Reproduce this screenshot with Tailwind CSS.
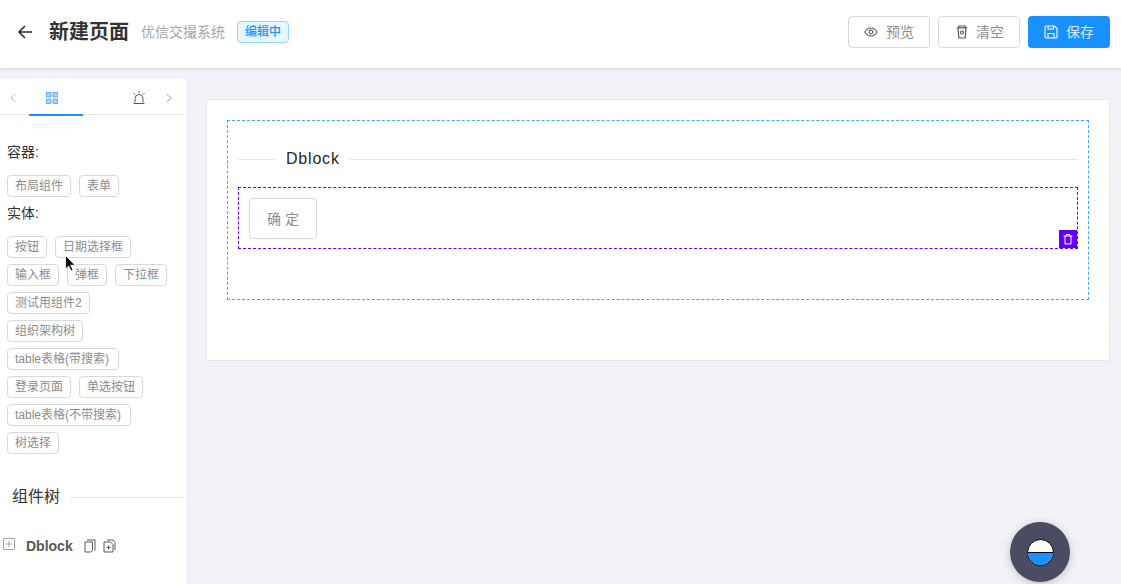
<!DOCTYPE html>
<html lang="zh">
<head>
  <meta charset="UTF-8" />
  <title>新建页面</title>
  <script src="https://cdn.jsdelivr.net/npm/@tailwindcss/browser@4"></script>
</head>
<body class="relative h-[584px] w-[1121px] overflow-hidden bg-[#f0f2f5] font-['Liberation_Sans','Noto_Sans_CJK_SC',sans-serif] text-[#333]">

  <!-- 顶部 -->
  <header class="relative z-10 flex h-[68px] items-center justify-between bg-white pr-[11px] pb-1 pl-[17px] shadow-[0_1px_4px_rgba(0,21,41,0.12)]">
    <div class="flex items-center">
      <svg class="h-4 w-4 text-[#262626]" viewBox="0 0 16 16" fill="none" stroke="currentColor" stroke-width="1.5"><path d="M15 8H2M8 2 2 8l6 6"/></svg>
      <h1 class="ml-4 text-xl leading-7 font-semibold">新建页面</h1>
      <span class="ml-3 text-sm text-[#a6a6a6]">优信交撮系统</span>
      <span class="ml-3 flex h-[22px] items-center rounded-[4px] border border-[#91d5ff] bg-[#e6f7ff] px-[7px] text-xs font-medium text-[#1890ff]">编辑中</span>
    </div>
    <div class="flex items-center gap-2">
      <button class="flex h-8 w-[82px] items-center justify-center rounded-[4px] border border-[#d9d9d9] bg-white text-sm text-[#8c8c8c]">
        <svg class="mr-2 h-[14px] w-[14px] text-[#595959]" viewBox="0 0 14 14" fill="none" stroke="currentColor" stroke-width="1.1"><path d="M.8 7C2.3 4.4 4.4 3 7 3s4.7 1.400 6.200 4C11.700 9.600 9.600 11 7 11S2.300 9.600.8 7Z"/><circle cx="7" cy="7" r="1.900"/></svg>预览
      </button>
      <button class="flex h-8 w-[82px] items-center justify-center rounded-[4px] border border-[#d9d9d9] bg-white pl-0.5 text-sm text-[#8c8c8c]">
        <svg class="mr-2 h-[14px] w-3 text-[#595959]" viewBox="0 0 12 14" fill="none" stroke="currentColor" stroke-width="1.2"><path d="M.8 2.800h10.400M2.500 2.500 3 1h6l.5 1.500M2 3l.8 10h6.400L10 3"/><circle cx="6" cy="7.500" r="1.500"/></svg>清空
      </button>
      <button class="flex h-8 w-[82px] items-center justify-center rounded-[4px] bg-[#1890ff] text-sm text-white/80">
        <svg class="mr-2 h-[14px] w-[14px] text-white" viewBox="0 0 14 14" fill="none" stroke="currentColor" stroke-width="1.100"><path d="M1 2a1 1 0 0 1 1-1h8.500L13 3.500V12a1 1 0 0 1-1 1H2a1 1 0 0 1-1-1ZM4 1v3h5.500V1M4 13V8.500h6V13"/></svg>保存
      </button>
    </div>
  </header>

  <div class="flex h-[516px] items-start">
    <!-- 左侧 -->
    <aside class="mt-[11px] h-[505px] w-[186px] shrink-0 bg-white">
      <div class="flex h-9 items-center border-b border-[#e8e8e8] pt-0.5 text-[#a6a6a6]">
        <svg class="ml-[9px] h-[10px] w-[8px] text-[#bfbfbf]" viewBox="0 0 8 10" fill="none" stroke="currentColor"><path d="M6.500 1 2 5l4.500 4"/></svg>
        <div class="relative ml-3 flex h-[34px] w-[54px] items-center justify-center pr-2">
          <svg class="h-3 w-3 text-[#1890ff]" viewBox="0 0 12 12" fill="#a3d3ff" stroke="currentColor" stroke-opacity="0.6"><path d="M.5.500h4.500v4.500H.5ZM7 .500h4.500v4.500H7ZM.5 7h4.500v4.500H.5ZM7 7h4.500v4.500H7Z"/></svg>
          <div class="absolute right-0 -bottom-px left-0 h-0.5 bg-[#1890ff]"></div>
        </div>
        <svg class="ml-[49px] h-[14px] w-[14px] text-[#595959]" viewBox="0 0 14 14" fill="none" stroke="currentColor"><path d="M3 11.500V7.500a4 4 0 0 1 8 0v4M1.500 12.500h11M7 0v2M1.500 2 3 3.500M12.500 2 11 3.500"/></svg>
        <svg class="ml-[19px] h-[10px] w-[8px]" viewBox="0 0 8 10" fill="none" stroke="currentColor"><path d="M1.500 1 6 5 1.500 9"/></svg>
      </div>

      <div class="px-[7px] text-sm">
        <p class="mt-[27px] leading-5">容器:</p>
        <div class="mt-[13px] flex w-[164px] flex-wrap gap-x-2 gap-y-1.5">
          <span class="flex h-[22px] items-center rounded-[4px] border border-[#d9d9d9] px-[7px] text-xs text-[#8c8c8c]">布局组件</span>
          <span class="flex h-[22px] items-center rounded-[4px] border border-[#d9d9d9] px-[7px] text-xs text-[#8c8c8c]">表单</span>
        </div>
        <p class="mt-1.5 leading-5">实体:</p>
        <div class="mt-[13px] flex w-[164px] flex-wrap gap-x-2 gap-y-1.5">
          <span class="flex h-[22px] items-center rounded-[4px] border border-[#d9d9d9] px-[7px] text-xs text-[#8c8c8c]">按钮</span>
          <span class="flex h-[22px] items-center rounded-[4px] border border-[#d9d9d9] px-[7px] text-xs text-[#8c8c8c]">日期选择框</span>
          <span class="flex h-[22px] items-center rounded-[4px] border border-[#d9d9d9] px-[7px] text-xs text-[#8c8c8c]">输入框</span>
          <span class="flex h-[22px] items-center rounded-[4px] border border-[#d9d9d9] px-[7px] text-xs text-[#8c8c8c]">弹框</span>
          <span class="flex h-[22px] items-center rounded-[4px] border border-[#d9d9d9] px-[7px] text-xs text-[#8c8c8c]">下拉框</span>
          <span class="flex h-[22px] items-center rounded-[4px] border border-[#d9d9d9] px-[7px] text-xs text-[#8c8c8c]">测试用组件2</span>
          <span class="flex h-[22px] items-center rounded-[4px] border border-[#d9d9d9] px-[7px] text-xs text-[#8c8c8c]">组织架构树</span>
          <span class="flex h-[22px] items-center rounded-[4px] border border-[#d9d9d9] pr-[9px] pl-[7px] text-xs text-[#8c8c8c]">table表格(带搜索)</span>
          <span class="flex h-[22px] items-center rounded-[4px] border border-[#d9d9d9] px-[7px] text-xs text-[#8c8c8c]">登录页面</span>
          <span class="flex h-[22px] items-center rounded-[4px] border border-[#d9d9d9] px-[7px] text-xs text-[#8c8c8c]">单选按钮</span>
          <span class="flex h-[22px] items-center rounded-[4px] border border-[#d9d9d9] pr-[9px] pl-[7px] text-xs text-[#8c8c8c]">table表格(不带搜索)</span>
          <span class="flex h-[22px] items-center rounded-[4px] border border-[#d9d9d9] px-[7px] text-xs text-[#8c8c8c]">树选择</span>
        </div>
      </div>

      <!-- 组件树 -->
      <div class="mt-[31px] flex items-center">
        <span class="ml-3 text-base leading-6">组件树</span>
        <div class="ml-2.5 h-px flex-1 bg-[#e8e8e8]"></div>
      </div>
      <div class="mt-[27px] flex items-center">
        <svg class="-mt-1 ml-[3px] h-3 w-3 text-[#a6a6a6]" viewBox="0 0 12 12" fill="none" stroke="currentColor"><path d="M.5.500h11v11H.5ZM3 6h6M6 3v6"/></svg>
        <span class="ml-[11px] text-sm font-bold text-[#595959]">Dblock</span>
        <svg class="ml-[11px] h-[14px] w-[12px] text-[#595959]" viewBox="0 0 12 14" fill="none" stroke="currentColor"><path d="M3 1h8v10.500M1 3h7.500v8.500L6.500 13H1Z"/></svg>
        <svg class="ml-[7px] h-[14px] w-[13px] text-[#595959]" viewBox="0 0 13 14" fill="none" stroke="currentColor"><path d="M4 1h6l2 2.500V11M1 3h6.500L10 5.500V13H1ZM5.500 6.500v4M3.500 8.500h4"/></svg>
      </div>
    </aside>

    <!-- 画布 -->
    <main class="mt-[31px] ml-5 h-[262px] w-[904px] border border-[#e8e8e8] bg-white p-5">
      <div class="h-[180px] border border-dashed border-[#40a9ff] px-2.5">
        <div class="mt-[26px] flex h-[24px] items-center">
          <div class="h-px w-[38px] bg-[#e8e8e8]"></div>
          <span class="px-2.5 text-base tracking-[0.8px] text-[#262626]">Dblock</span>
          <div class="h-px flex-1 bg-[#e8e8e8]"></div>
        </div>
        <div class="relative mt-4 h-[62px] border border-dashed border-[#6200ff] p-2.5">
          <button class="h-[41px] w-[68px] rounded-[4px] border border-[#d9d9d9] bg-white text-sm text-[#8c8c8c] shadow-[0_2px_0_rgba(0,0,0,0.015)]">确 定</button>
          <div class="absolute right-0 bottom-0 flex h-[18px] w-[18px] items-center justify-center bg-[#6200ff]">
            <svg class="h-3 w-3 text-white" viewBox="0 0 12 12" fill="none" stroke="currentColor"><path d="M1.500 3h9M4 3l.5-1.500h3L8 3M3 3v8h6V3"/></svg>
          </div>
        </div>
      </div>
    </main>
  </div>

  <!-- 悬浮球 -->
  <div class="absolute top-[522px] left-[1010px] flex h-[60px] w-[60px] items-center justify-center rounded-full bg-[#4b4b63] shadow-[0_2px_8px_rgba(0,0,0,0.2)]">
    <div class="flex h-[27px] w-[27px] flex-col overflow-hidden rounded-full border border-black bg-white">
      <div class="h-[13px] border-b border-black"></div>
      <div class="flex-1 bg-[#1890ff]"></div>
    </div>
  </div>

  <!-- 鼠标指针 -->
  <svg class="absolute top-[255px] left-[65px] h-[18px] w-3" viewBox="0 0 12 18"><path d="M.5.500v13.500l3.200-3 2.300 5 2-1-2.300-4.800H10Z" fill="#000" stroke="#fff" stroke-width="0.8"/></svg>
</body>
</html>
